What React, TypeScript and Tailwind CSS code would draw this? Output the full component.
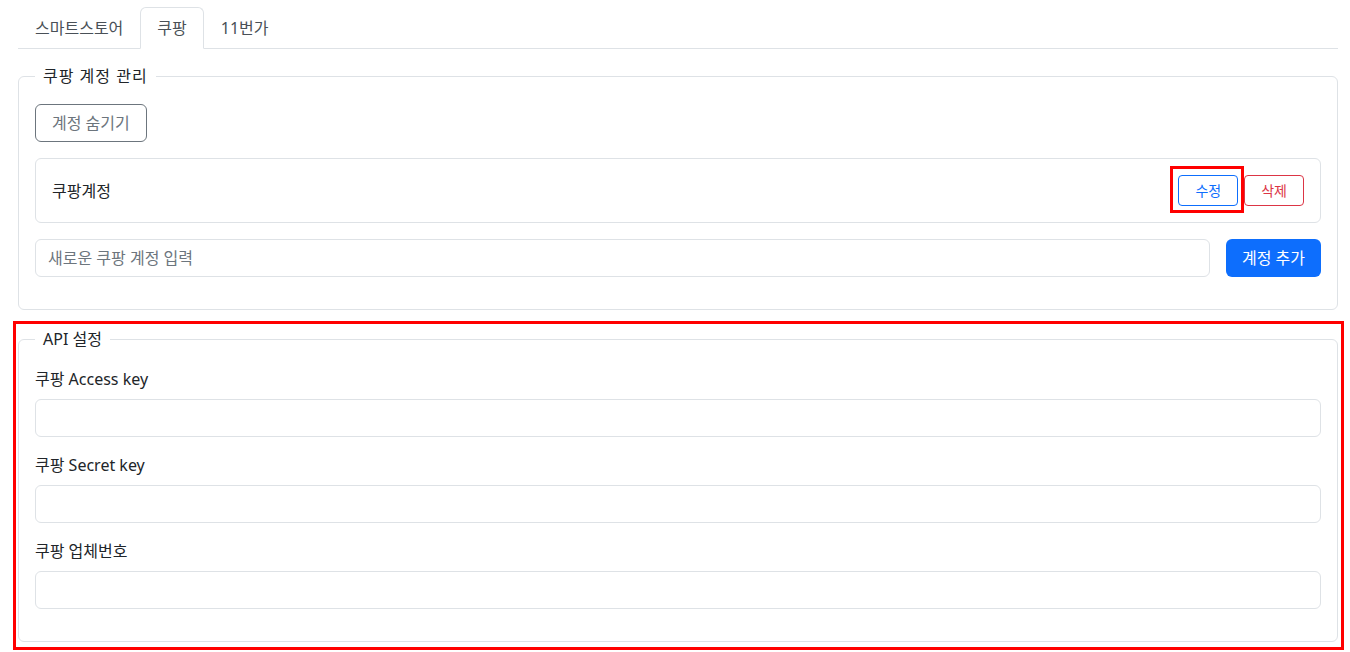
const font = "font-['Noto_Sans','Noto_Sans_CJK_KR',sans-serif]"

export default function App() {
  return (
    <div className={`${font} bg-white pl-[18px] pr-[12px] pt-[7px] text-base leading-6 text-[#212529]`}>
      <Tabs />

      <fieldset className="mt-[15px] rounded-md border border-[#dee2e6] px-4 pt-4 pb-4">
        <legend className="px-2 text-base leading-6 tracking-[1px]">쿠팡 계정 관리</legend>
        <button className="rounded-md border border-[#6c757d] px-4 py-1.5 text-[#6c757d]">계정 숨기기</button>

        <div className="mt-4 flex items-center justify-between rounded-md border border-[#dee2e6] p-4">
          <span>쿠팡계정</span>
          <div className="flex gap-1.5">
            <div className="relative">
              <button className="rounded border border-[#0d6efd] px-4 py-1 text-sm leading-[21px] text-[#0d6efd]">수정</button>
              <div className="pointer-events-none absolute -top-[9px] -bottom-[7px] -left-[8px] -right-[6px] border-[3px] border-[#ff0000]" />
            </div>
            <button className="rounded border border-[#dc3545] px-4 py-1 text-sm leading-[21px] text-[#dc3545]">삭제</button>
          </div>
        </div>

        <div className="mt-4 mb-4 flex gap-4">
          <input
            className="h-[38px] flex-1 rounded-md border border-[#dee2e6] px-3 text-base outline-none placeholder:text-[#6c757d]"
            placeholder="새로운 쿠팡 계정 입력"
          />
          <button className="rounded-md bg-[#0d6efd] px-4 text-white">계정 추가</button>
        </div>
      </fieldset>

      {/* red highlight frame round the API block */}
      <div className="mt-[11px] -ml-[5px] -mr-[6px] border-[3px] border-[#ff0000] pt-[3px] pr-[3px] pb-[5px] pl-[2px]">
        <fieldset className="rounded-md border border-[#dee2e6] px-4 pt-4 pb-4">
          <legend className="px-2 text-base leading-6">API 설정</legend>
          <Field label="쿠팡 Access key" />
          <Field label="쿠팡 Secret key" />
          <Field label="쿠팡 업체번호" />
        </fieldset>
      </div>
    </div>
  )
}

const Tabs = () => (
  <ul className="flex border-b border-[#dee2e6]">
    <li className="-mb-px border border-transparent px-4 py-2 text-[#495057]">스마트스토어</li>
    <li className="-mb-px rounded-t-md border border-[#dee2e6] border-b-white bg-white px-4 py-2 text-[#495057]">쿠팡</li>
    <li className="-mb-px border border-transparent px-4 py-2 text-[#495057]">11번가</li>
  </ul>
)

const Field = ({ label }: { label: string }) => (
  <div className="mb-4">
    <label className="mb-2 block">{label}</label>
    <input className="block h-[38px] w-full rounded-md border border-[#dee2e6] px-3 outline-none" />
  </div>
)
